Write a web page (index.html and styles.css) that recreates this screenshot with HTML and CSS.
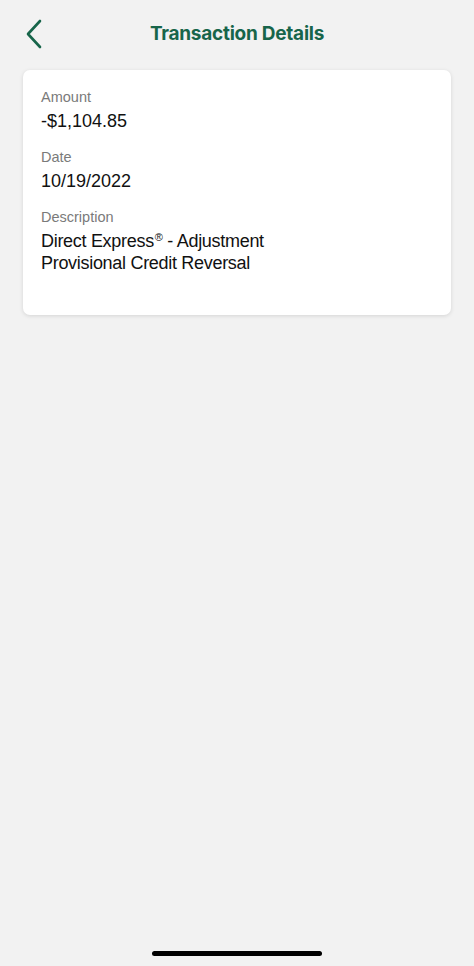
FILE: index.html
```html
<!DOCTYPE html>
<html>
	<head>
		<meta charset="UTF-8">
		<title>Transaction Details</title>
		<link rel="stylesheet" href="styles.css">
	</head>
	<body>
		<div class="screen">
			<div class="topbar">
				<a class="back" href="#">
					<svg width="18" height="30" viewBox="0 0 18 30"><path d="M15 2 L3 15 L15 28" fill="none" stroke="#17654a" stroke-width="2.6" stroke-linecap="round" stroke-linejoin="round"/></svg>
				</a>
				<h1 class="title">Transaction Details</h1>
			</div>
			<div class="card">
				<div class="field">
					<div class="label">Amount</div>
					<div class="value">-$1,104.85</div>
				</div>
				<div class="field">
					<div class="label">Date</div>
					<div class="value">10/19/2022</div>
				</div>
				<div class="field desc">
					<div class="label">Description</div>
					<div class="value">Direct Express<sup>®</sup> - Adjustment<br>Provisional Credit Reversal</div>
				</div>
			</div>
			<div class="spacer"></div>
			<div class="homebar"></div>
		</div>
	</body>
</html>
```

FILE: styles.css
```css
* {margin: 0; padding: 0; box-sizing: border-box;}
html, body {height: 100%;}
body {
	background: #f2f2f2;
	font-family: "Liberation Sans", Arial, sans-serif;
	color: #111;
}
.screen {
	height: 966px;
	display: flex;
	flex-direction: column;
}
.topbar {
	height: 66px;
	position: relative;
	display: flex;
	align-items: center;
	justify-content: center;
}
.back {
	position: absolute;
	left: 25px; top: 19px;
	display: block;
	width: 18px; height: 30px;
}
.title {
	font-family: Inter, "Liberation Sans", sans-serif;
	font-size: 19px;
	font-weight: 700;
	color: #17654a;
	letter-spacing: -0.25px;
}
.card {
	margin: 4px 23px 0 23px;
	background: #fff;
	border-radius: 7px;
	box-shadow: 0 1px 4px rgba(0,0,0,0.12);
	padding: 17px 18px 38px 18px;
	height: 245px;
}
.field {margin-bottom: 15px;}
.desc {margin-top: 1px;}
.label {
	font-size: 14.5px;
	color: #7a7a7a;
	line-height: 20px;
}
.value {
	font-size: 18px;
	line-height: 22px;
	color: #111;
	margin-top: 3px;
}
.desc .value {letter-spacing: -0.3px;}
.desc sup {
	font-size: 11px;
	line-height: 0;
	vertical-align: 6px;
	margin-left: 1px;
}
.spacer {flex: 1;}
.homebar {
	width: 170px;
	height: 5px;
	background: #000;
	border-radius: 3px;
	margin: 0 auto 10px auto;
}
```
